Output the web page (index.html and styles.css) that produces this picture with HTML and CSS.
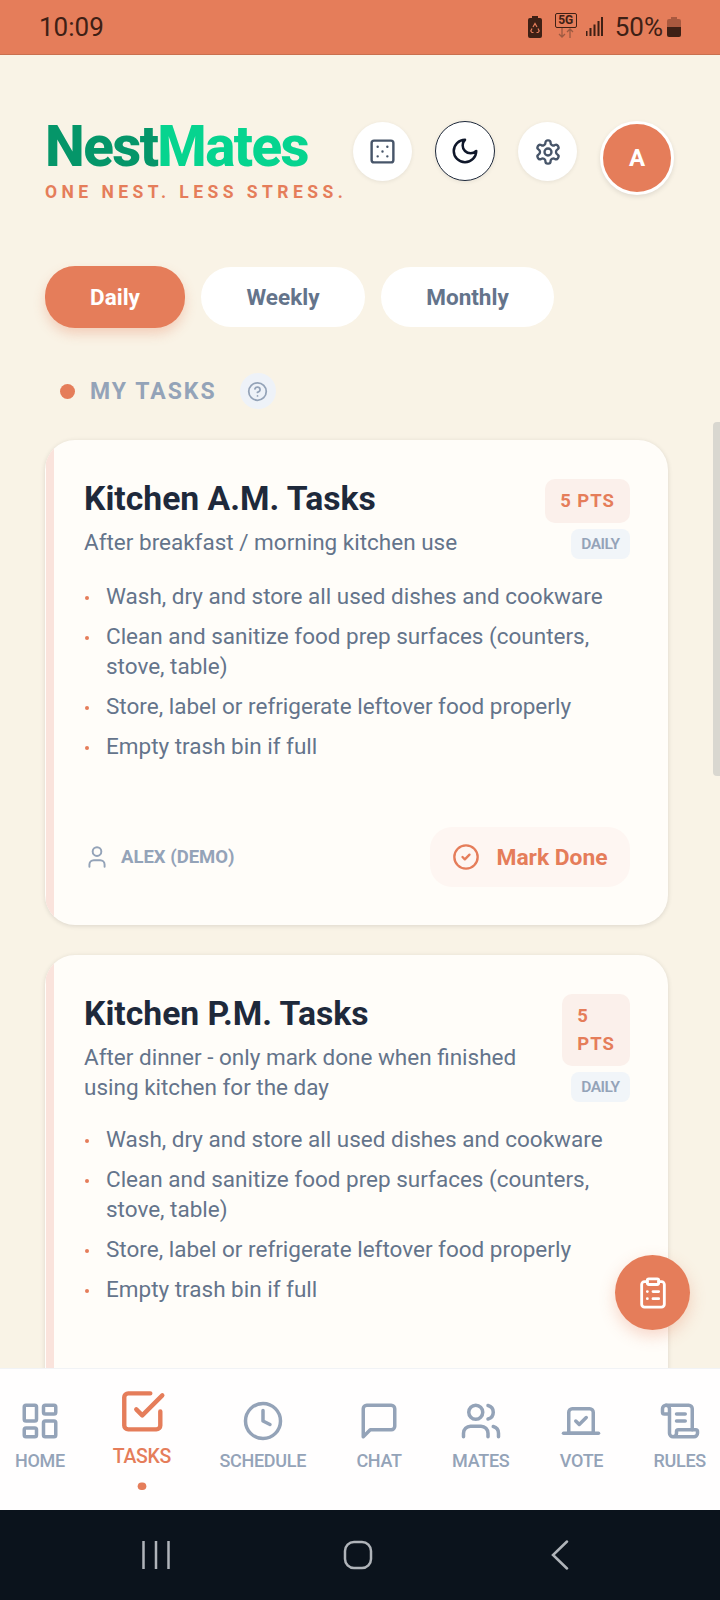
FILE: index.html
```html
<!DOCTYPE html>
<html lang="en">
  <head>
    <meta charset="UTF-8" />
    <meta name="viewport" content="width=device-width, initial-scale=1.0" />
    <title>NestMates</title>
    <link rel="stylesheet" href="styles.css">
  </head>

  <body>
    <div class="phone">
      <div class="status-bar">
        <span class="clock">10:09</span>
        <div class="status-icons">
          <svg class="st-saver" viewBox="0 0 14 22"><path d="M4 0h6v2h2a2 2 0 0 1 2 2v16a2 2 0 0 1-2 2H2a2 2 0 0 1-2-2V4a2 2 0 0 1 2-2h2z" fill="#3e2015"/><path d="M5 11l2-3.500 2 3.500M10 12.500l1.200 2.500-1.200 1.500H8.500M5.500 16.500H4L2.800 15 4 12.500" fill="none" stroke="#e57d5a" stroke-width="1.200"/></svg>
          <div class="st-net">
            <span class="st-5g">5G</span>
            <svg viewBox="0 0 20 10"><path d="M6 0v9M3 6l3 3 3-3" fill="none" stroke="#9c5a42" stroke-width="1.300"/><path d="M14 10V1M11 4l3-3 3 3" fill="none" stroke="#9c5a42" stroke-width="1.300"/></svg>
          </div>
          <svg class="st-signal" viewBox="0 0 17 19"><path d="M1 14v5M5 11v8M9 7.500V19M13 4v15M16.500 0v19" stroke="#3e2015" stroke-width="2" transform="translate(-.5 0)"/></svg>
          <span class="st-pct">50%</span>
          <svg class="st-batt" viewBox="0 0 14 20"><path d="M4 0h6v2h2a2 2 0 0 1 2 2v6H0V4a2 2 0 0 1 2-2h2z" fill="#a9593f"/><path d="M0 10h14v8a2 2 0 0 1-2 2H2a2 2 0 0 1-2-2z" fill="#3e2015"/></svg>
        </div>
      </div>

      <main class="content">
        <header class="top">
          <div class="brand">
            <h1 class="logo"><span class="logo-a">Nest</span><span class="logo-b">Mates</span></h1>
            <p class="tagline">ONE NEST. LESS STRESS.</p>
          </div>
          <div class="top-actions">
            <button class="round-btn">
              <svg class="ico dice" viewBox="0 0 24 24"><rect x="3" y="3" width="18" height="18" rx="2"/><path d="M8 8h.01M16 8h.01M12 12h.01M8 16h.01M16 16h.01"/></svg>
            </button>
            <button class="round-btn round-btn-dark">
              <svg class="ico moon" viewBox="0 0 24 24"><path d="M12 3a6 6 0 0 0 9 9 9 9 0 1 1-9-9Z"/></svg>
            </button>
            <button class="round-btn">
              <svg class="ico" viewBox="0 0 24 24"><path d="M12.220 2h-.44a2 2 0 0 0-2 2v.18a2 2 0 0 1-1 1.730l-.43.25a2 2 0 0 1-2 0l-.15-.08a2 2 0 0 0-2.730.730l-.22.38a2 2 0 0 0 .73 2.730l.15.1a2 2 0 0 1 1 1.720v.51a2 2 0 0 1-1 1.740l-.15.09a2 2 0 0 0-.73 2.730l.22.38a2 2 0 0 0 2.730.73l.15-.08a2 2 0 0 1 2 0l.43.25a2 2 0 0 1 1 1.730V20a2 2 0 0 0 2 2h.44a2 2 0 0 0 2-2v-.18a2 2 0 0 1 1-1.730l.43-.25a2 2 0 0 1 2 0l.15.08a2 2 0 0 0 2.730-.73l.22-.39a2 2 0 0 0-.73-2.730l-.15-.08a2 2 0 0 1-1-1.740v-.5a2 2 0 0 1 1-1.740l.15-.09a2 2 0 0 0 .73-2.730l-.22-.38a2 2 0 0 0-2.730-.73l-.15.08a2 2 0 0 1-2 0l-.43-.25a2 2 0 0 1-1-1.730V4a2 2 0 0 0-2-2z"/><circle cx="12" cy="12" r="3"/></svg>
            </button>
            <div class="avatar">A</div>
          </div>
        </header>

        <div class="tabs">
          <button class="tab tab-active">Daily</button>
          <button class="tab tab-weekly">Weekly</button>
          <button class="tab tab-monthly">Monthly</button>
        </div>

        <div class="section-head">
          <span class="section-dot"></span>
          <span class="section-title">MY TASKS</span>
          <span class="help">
            <svg viewBox="0 0 24 24"><circle cx="12" cy="12" r="10"/><path d="M9.090 9a3 3 0 0 1 5.830 1c0 2-3 3-3 3M12 17h.01"/></svg>
          </span>
        </div>

        <section class="card">
          <div class="card-head">
            <div class="card-text">
              <h2>Kitchen A.M. Tasks</h2>
              <p>After breakfast / morning kitchen use</p>
            </div>
            <div class="card-tags">
              <span class="pts">5 PTS</span>
              <span class="freq">DAILY</span>
            </div>
          </div>
          <ul class="checklist">
            <li>Wash, dry and store all used dishes and cookware</li>
            <li>Clean and sanitize food prep surfaces (counters, stove, table)</li>
            <li>Store, label or refrigerate leftover food properly</li>
            <li>Empty trash bin if full</li>
          </ul>
          <div class="card-foot">
            <div class="owner">
              <svg viewBox="0 0 24 24"><path d="M19 21v-2a4 4 0 0 0-4-4H9a4 4 0 0 0-4 4v2"/><circle cx="12" cy="7" r="4"/></svg>
              ALEX (DEMO)
            </div>
            <button class="done-btn">
              <svg viewBox="0 0 24 24"><circle cx="12" cy="12" r="10"/><path d="m9 12 2 2 4-4"/></svg>
              Mark Done
            </button>
          </div>
        </section>

        <section class="card card-last">
          <div class="card-head">
            <div class="card-text">
              <h2>Kitchen P.M. Tasks</h2>
              <p>After dinner - only mark done when finished using kitchen for the day</p>
            </div>
            <div class="card-tags">
              <span class="pts">5 PTS</span>
              <span class="freq">DAILY</span>
            </div>
          </div>
          <ul class="checklist">
            <li>Wash, dry and store all used dishes and cookware</li>
            <li>Clean and sanitize food prep surfaces (counters, stove, table)</li>
            <li>Store, label or refrigerate leftover food properly</li>
            <li>Empty trash bin if full</li>
          </ul>
        </section>
      </main>

      <div class="scrollbar"></div>
      <button class="fab">
        <svg viewBox="0 0 24 24"><rect x="8" y="2" width="8" height="4" rx="1"/><path d="M16 4h2a2 2 0 0 1 2 2v14a2 2 0 0 1-2 2H6a2 2 0 0 1-2-2V6a2 2 0 0 1 2-2h2M12 11h4M12 16h4M8 11h.01M8 16h.01"/></svg>
      </button>

      <nav class="bottom-nav">
        <div class="nav-item">
          <svg viewBox="0 0 24 24"><rect x="3" y="3" width="7" height="9" rx="1"/><rect x="14" y="3" width="7" height="5" rx="1"/><rect x="14" y="12" width="7" height="9" rx="1"/><rect x="3" y="16" width="7" height="5" rx="1"/></svg>
          <span>HOME</span>
        </div>
        <div class="nav-item nav-active">
          <svg viewBox="0 0 24 24"><path d="M9 11l3 3L22 4"/><path d="M21 12v7a2 2 0 0 1-2 2H5a2 2 0 0 1-2-2V5a2 2 0 0 1 2-2h11"/></svg>
          <span>TASKS</span>
          <i class="nav-dot"></i>
        </div>
        <div class="nav-item">
          <svg viewBox="0 0 24 24"><circle cx="12" cy="12" r="10"/><path d="M12 6v6l4 2"/></svg>
          <span>SCHEDULE</span>
        </div>
        <div class="nav-item">
          <svg viewBox="0 0 24 24"><path d="M21 15a2 2 0 0 1-2 2H7l-4 4V5a2 2 0 0 1 2-2h14a2 2 0 0 1 2 2z"/></svg>
          <span>CHAT</span>
        </div>
        <div class="nav-item">
          <svg viewBox="0 0 24 24"><path d="M16 21v-2a4 4 0 0 0-4-4H6a4 4 0 0 0-4 4v2"/><circle cx="9" cy="7" r="4"/><path d="M22 21v-2a4 4 0 0 0-3-3.870M16 3.130a4 4 0 0 1 0 7.750"/></svg>
          <span>MATES</span>
        </div>
        <div class="nav-item">
          <svg viewBox="0 0 24 24"><path d="m9 12 2 2 4-4"/><path d="M5 7c0-1.100.9-2 2-2h10a2 2 0 0 1 2 2v12H5V7Z"/><path d="M22 19H2"/></svg>
          <span>VOTE</span>
        </div>
        <div class="nav-item">
          <svg viewBox="0 0 24 24"><path d="M15 12h-5M15 8h-5M19 17V5a2 2 0 0 0-2-2H4"/><path d="M8 21h12a2 2 0 0 0 2-2v-1a1 1 0 0 0-1-1H11a1 1 0 0 0-1 1v1a2 2 0 1 1-4 0V5a2 2 0 1 0-4 0v2a1 1 0 0 0 1 1h3"/></svg>
          <span>RULES</span>
        </div>
      </nav>

      <div class="system-nav">
        <svg class="sys-recent" viewBox="0 0 28 28"><path d="M1.500 0v28M14 0v28M26.500 0v28"/></svg>
        <svg class="sys-home" viewBox="0 0 30 30"><rect x="2" y="2" width="26" height="26" rx="9"/></svg>
        <svg class="sys-back" viewBox="0 0 18 30"><path d="M16 1.500 2 15l14 13.500"/></svg>
      </div>
    </div>
  </body>
</html>
```

FILE: styles.css
```css
* {
  box-sizing: border-box;
}

body {
  margin: 0;
  background-color: #f9f3e6;
  font-family: Roboto, "Liberation Sans", sans-serif;
}

button {
  border: none;
  font-family: inherit;
  padding: 0;
}

.phone {
  position: relative;
  display: flex;
  flex-direction: column;
  width: 720px;
  height: 1600px;
  overflow: hidden;
}

/* status bar */
.status-bar {
  display: flex;
  flex-shrink: 0;
  justify-content: space-between;
  align-items: center;
  height: 55px;
  padding: 0 39px 1px 39px;
  background-color: #e57d5a;
  border-bottom: 1px solid #c9704f;
  color: #3e2015;
}

.clock {
  font-size: 26px;
}

.status-icons {
  display: flex;
  align-items: center;
}

.st-saver {
  width: 14px;
  height: 22px;
  margin-right: 13px;
}

.st-net {
  display: flex;
  flex-direction: column;
  align-items: center;
  width: 22px;
  margin-top: -2px;
  margin-right: 9px;
}

.st-5g {
  width: 22px;
  height: 15px;
  border: 1px solid #3e2015;
  border-radius: 2px;
  font-size: 12px;
  font-weight: 700;
  line-height: 13px;
  text-align: center;
}

.st-net svg {
  width: 20px;
  height: 10px;
}

.st-signal {
  width: 17px;
  height: 19px;
  margin-right: 12px;
}

.st-pct {
  margin-right: 4px;
  font-size: 26px;
}

.st-batt {
  width: 14px;
  height: 20px;
}

/* main area */
.content {
  flex: 1;
  min-height: 0;
  overflow: hidden;
  padding: 66px 52px 0 45px;
}

.top {
  display: flex;
  justify-content: space-between;
  align-items: flex-start;
  height: 115px;
}

.logo {
  margin: -2px 0 0;
  font-size: 56.500px;
  font-weight: 800;
  line-height: 56px;
  letter-spacing: -1.600px;
}

.logo-a {
  color: #059669;
}

.logo-b {
  color: #06d48f;
}

.tagline {
  margin: 7px 0 0;
  color: #e57d5a;
  font-size: 17.500px;
  font-weight: 700;
  line-height: 20px;
  letter-spacing: 4.450px;
}

.top-actions {
  display: flex;
  gap: 23px;
  margin-top: 1px;
  margin-right: -6px;
}

.round-btn {
  display: flex;
  justify-content: center;
  align-items: center;
  width: 59px;
  height: 59px;
  border-radius: 50%;
  background-color: #fff;
  box-shadow: 0 1px 4px rgba(0, 0, 0, 0.08);
}

.round-btn-dark {
  width: 60px;
  height: 60px;
  margin-top: -1px;
  border: 1px solid #1e293b;
}

.ico {
  width: 28px;
  height: 28px;
  fill: none;
  stroke: #475569;
  stroke-width: 2;
  stroke-linecap: round;
  stroke-linejoin: round;
}

.dice {
  width: 29px;
  height: 29px;
}

.moon {
  width: 30px;
  height: 30px;
  stroke: #0f172a;
}

.avatar {
  display: flex;
  justify-content: center;
  align-items: center;
  width: 74px;
  height: 74px;
  margin-top: -1px;
  border: 3px solid #fff;
  border-radius: 50%;
  background-color: #e57d5a;
  box-shadow: 0 2px 5px rgba(0, 0, 0, 0.1);
  color: #fff;
  font-size: 24px;
  font-weight: 700;
}

/* tabs */
.tabs {
  display: flex;
  align-items: center;
  gap: 16px;
  margin-top: 30px;
}

.tab {
  height: 60px;
  border-radius: 30px;
  background-color: #fff;
  color: #64748b;
  font-size: 22.500px;
  font-weight: 700;
}

.tab-active {
  width: 140px;
  height: 62px;
  background-color: #e57d5a;
  box-shadow: 0 6px 12px rgba(229, 125, 90, 0.3);
  color: #fff;
}

.tab-weekly {
  width: 164px;
}

.tab-monthly {
  width: 173px;
}

/* section heading */
.section-head {
  display: flex;
  align-items: center;
  margin-top: 45px;
  padding-left: 15px;
}

.section-dot {
  width: 15px;
  height: 15px;
  border-radius: 50%;
  background-color: #e57d5a;
}

.section-title {
  margin-left: 15px;
  color: #94a3b8;
  font-size: 23px;
  font-weight: 700;
  letter-spacing: 2px;
}

.help {
  display: flex;
  justify-content: center;
  align-items: center;
  width: 36px;
  height: 36px;
  margin-left: 23px;
  border-radius: 50%;
  background-color: #eef2f8;
}

.help svg {
  width: 21px;
  height: 21px;
  fill: none;
  stroke: #94a3b8;
  stroke-width: 2;
  stroke-linecap: round;
  stroke-linejoin: round;
}

/* task cards */
.card {
  position: relative;
  overflow: hidden;
  margin-top: 30px;
  padding: 39px 38px 38px 39px;
  border-radius: 30px;
  background-color: #fffdf9;
  box-shadow: 0 1px 5px rgba(0, 0, 0, 0.12);
}

.section-head + .card {
  margin-top: 31px;
}

.card-last {
  padding-bottom: 120px;
}

.card::before {
  content: "";
  position: absolute;
  top: 0;
  bottom: 0;
  left: 1px;
  width: 8px;
  background-color: #fae3dc;
}

.card-head {
  display: flex;
  justify-content: space-between;
  gap: 16px;
}

.card-text h2 {
  margin: 0;
  color: #1e293b;
  font-size: 33.700px;
  font-weight: 700;
  line-height: 39px;
}

.card-text p {
  margin: 9px 0 0;
  color: #64748b;
  font-size: 22.500px;
  line-height: 30px;
}

.card-tags {
  display: flex;
  flex-direction: column;
  align-items: flex-end;
  gap: 6px;
}

.pts {
  padding: 8px 15px;
  border-radius: 10px;
  background-color: #fbf0eb;
  color: #e57d5a;
  font-size: 18.500px;
  font-weight: 700;
  line-height: 28px;
  letter-spacing: 1px;
}

.freq {
  padding: 0 10.500px;
  border-radius: 8px;
  background-color: #f1f5f9;
  color: #94a3b8;
  font-size: 15.500px;
  font-weight: 600;
  line-height: 30px;
  letter-spacing: -0.500px;
}

.checklist {
  margin: 22px 0 0;
  padding: 0;
  list-style: none;
}

.checklist li {
  position: relative;
  margin-bottom: 10px;
  padding-left: 22px;
  color: #64748b;
  font-size: 22.500px;
  line-height: 30px;
}

.checklist li::before {
  content: "";
  position: absolute;
  top: 15px;
  left: 1px;
  width: 4px;
  height: 4px;
  border-radius: 50%;
  background-color: #e57d5a;
}

.card-foot {
  display: flex;
  justify-content: space-between;
  align-items: center;
  margin-top: 66px;
}

.owner {
  display: flex;
  align-items: center;
  gap: 11px;
  color: #94a3b8;
  font-size: 18.500px;
  font-weight: 700;
}

.owner svg {
  width: 26px;
  height: 26px;
  fill: none;
  stroke: #94a3b8;
  stroke-width: 1.800;
  stroke-linecap: round;
  stroke-linejoin: round;
}

.done-btn {
  display: flex;
  justify-content: center;
  align-items: center;
  gap: 16px;
  width: 200px;
  height: 60px;
  border-radius: 22px;
  background-color: #fef6f2;
  color: #e57d5a;
  font-size: 22.800px;
  font-weight: 700;
}

.done-btn svg {
  width: 28px;
  height: 28px;
  fill: none;
  stroke: #e57d5a;
  stroke-width: 2;
  stroke-linecap: round;
  stroke-linejoin: round;
}

.scrollbar {
  position: absolute;
  top: 422px;
  right: 0;
  width: 7px;
  height: 354px;
  border-radius: 4px 0 0 4px;
  background-color: #d9d7d0;
}

.fab {
  position: absolute;
  top: 1255px;
  left: 615px;
  display: flex;
  justify-content: center;
  align-items: center;
  width: 75px;
  height: 75px;
  border-radius: 50%;
  background-color: #e57d5a;
  box-shadow: 0 6px 16px rgba(229, 125, 90, 0.3);
}

.fab svg {
  width: 34px;
  height: 34px;
  fill: none;
  stroke: #fff;
  stroke-width: 2;
  stroke-linecap: round;
  stroke-linejoin: round;
}

/* bottom nav */
.bottom-nav {
  display: flex;
  flex-shrink: 0;
  justify-content: space-between;
  height: 142px;
  padding: 0 14px 0 15px;
  border-top: 1px solid #f1f3f6;
  background-color: #fffefe;
}

.nav-item {
  display: flex;
  flex-direction: column;
  align-items: center;
  padding-top: 31px;
  color: #94a3b8;
  font-size: 18px;
  font-weight: 500;
  letter-spacing: -0.300px;
}

.nav-item svg {
  width: 42px;
  height: 42px;
  margin-bottom: 8px;
  fill: none;
  stroke: #94a3b8;
  stroke-width: 2;
  stroke-linecap: round;
  stroke-linejoin: round;
}

.nav-active {
  padding-top: 17px;
  color: #e57d5a;
  transform: scale(1.08);
  transform-origin: top center;
}

.nav-active svg {
  width: 44.500px;
  height: 44.500px;
  margin-bottom: 8px;
  stroke: #e57d5a;
  stroke-width: 2.200;
}

.nav-dot {
  width: 7.500px;
  height: 7.500px;
  margin-top: 14px;
  border-radius: 50%;
  background-color: #e57d5a;
}

/* android buttons */
.system-nav {
  display: flex;
  flex-shrink: 0;
  align-items: center;
  height: 90px;
  padding-left: 142px;
  background-color: #0b131c;
}

.system-nav svg {
  fill: none;
  stroke: #b0b4b9;
  stroke-width: 2.500;
  stroke-linecap: round;
}

.sys-recent {
  width: 28px;
  height: 28px;
}

.sys-home {
  width: 30px;
  height: 30px;
  margin-left: 173px;
}

.sys-back {
  width: 18px;
  height: 30px;
  margin-left: 178px;
}
```
